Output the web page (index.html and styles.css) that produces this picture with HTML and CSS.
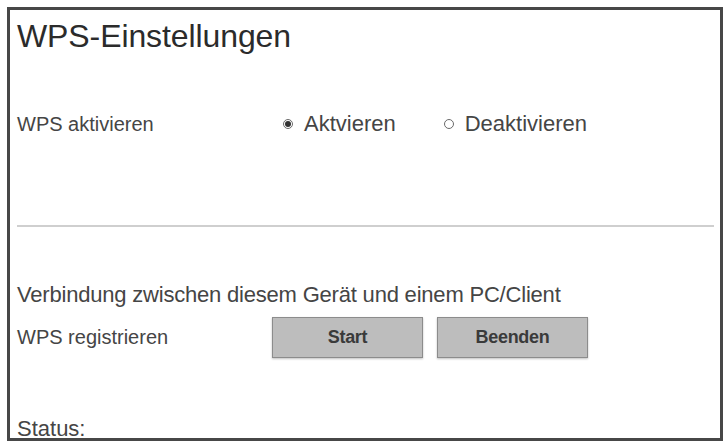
FILE: index.html
```html
<!DOCTYPE html>
<html lang="de">
<head>
    <meta charset="UTF-8">
    <meta name="viewport" content="width=device-width, initial-scale=1.0">
    <title>WPS-Einstellungen</title>
    <link rel="stylesheet" href="styles.css">
</head>
<body>
    <div class="panel">
        <h1 class="panel-title">WPS-Einstellungen</h1>

        <div class="row row-toggle">
            <span class="field-label">WPS aktivieren</span>
            <div class="radio-group">
                <label class="radio">
                    <span class="radio-mark checked"></span>
                    <span>Aktvieren</span>
                </label>
                <label class="radio">
                    <span class="radio-mark"></span>
                    <span>Deaktivieren</span>
                </label>
            </div>
        </div>

        <div class="divider"></div>

        <p class="section-note">Verbindung zwischen diesem Gerät und einem PC/Client</p>

        <div class="row row-register">
            <span class="field-label">WPS registrieren</span>
            <div class="button-group">
                <button class="btn">Start</button>
                <button class="btn">Beenden</button>
            </div>
        </div>

        <p class="status">Status:</p>
    </div>
</body>
</html>
```

FILE: styles.css
```css
:root {
    --frame-color: #474747;
    --text-color: #454545;
    --title-color: #2b2b2b;
    --line-color: #cfcfcf;
    --button-bg: #bdbdbd;
    --button-border: #8c8c8c;
}

* {
    margin: 0;
    padding: 0;
    box-sizing: border-box;
}

body {
    background: #ffffff;
    font-family: "Liberation Sans", Arial, sans-serif;
    color: var(--text-color);
}

.panel {
    margin: 7px 0 0 7px;
    width: 716px;
    height: 434px;
    border: 3px solid var(--frame-color);
    padding: 8px 6px 0 7px;
    overflow: hidden;
}

.panel-title {
    font-size: 32px;
    font-weight: normal;
    line-height: 36px;
    color: var(--title-color);
    letter-spacing: -0.1px;
}

.row {
    display: flex;
    align-items: center;
}

.field-label {
    width: 255px;
    flex-shrink: 0;
    font-size: 20px;
}

.row-toggle {
    margin-top: 58px;
    height: 24px;
}

.radio-group {
    display: flex;
    align-items: center;
    gap: 48px;
    padding-left: 11px;
    font-size: 22px;
}

.radio {
    display: flex;
    align-items: center;
    gap: 11px;
}

.radio-mark {
    width: 10px;
    height: 10px;
    border: 1px solid #6a6a6a;
    border-radius: 50%;
    display: flex;
    align-items: center;
    justify-content: center;
}

.radio-mark.checked::after {
    content: "";
    width: 6px;
    height: 6px;
    border-radius: 50%;
    background: #333333;
}

.divider {
    margin-top: 89px;
    height: 2px;
    background: var(--line-color);
}

.section-note {
    margin-top: 55px;
    font-size: 22px;
    line-height: 26px;
    letter-spacing: -0.2px;
}

.row-register {
    margin-top: 9px;
}

.button-group {
    display: flex;
    gap: 14px;
}

.btn {
    width: 151px;
    height: 41px;
    background: var(--button-bg);
    border: 1px solid var(--button-border);
    box-shadow: 0 1px 2px rgba(0, 0, 0, 0.25);
    font-family: "Liberation Sans", Arial, sans-serif;
    font-weight: bold;
    font-size: 18px;
    letter-spacing: -0.3px;
    color: #3a3a3a;
}

.status {
    margin-top: 58px;
    font-size: 22px;
    line-height: 26px;
}
```
